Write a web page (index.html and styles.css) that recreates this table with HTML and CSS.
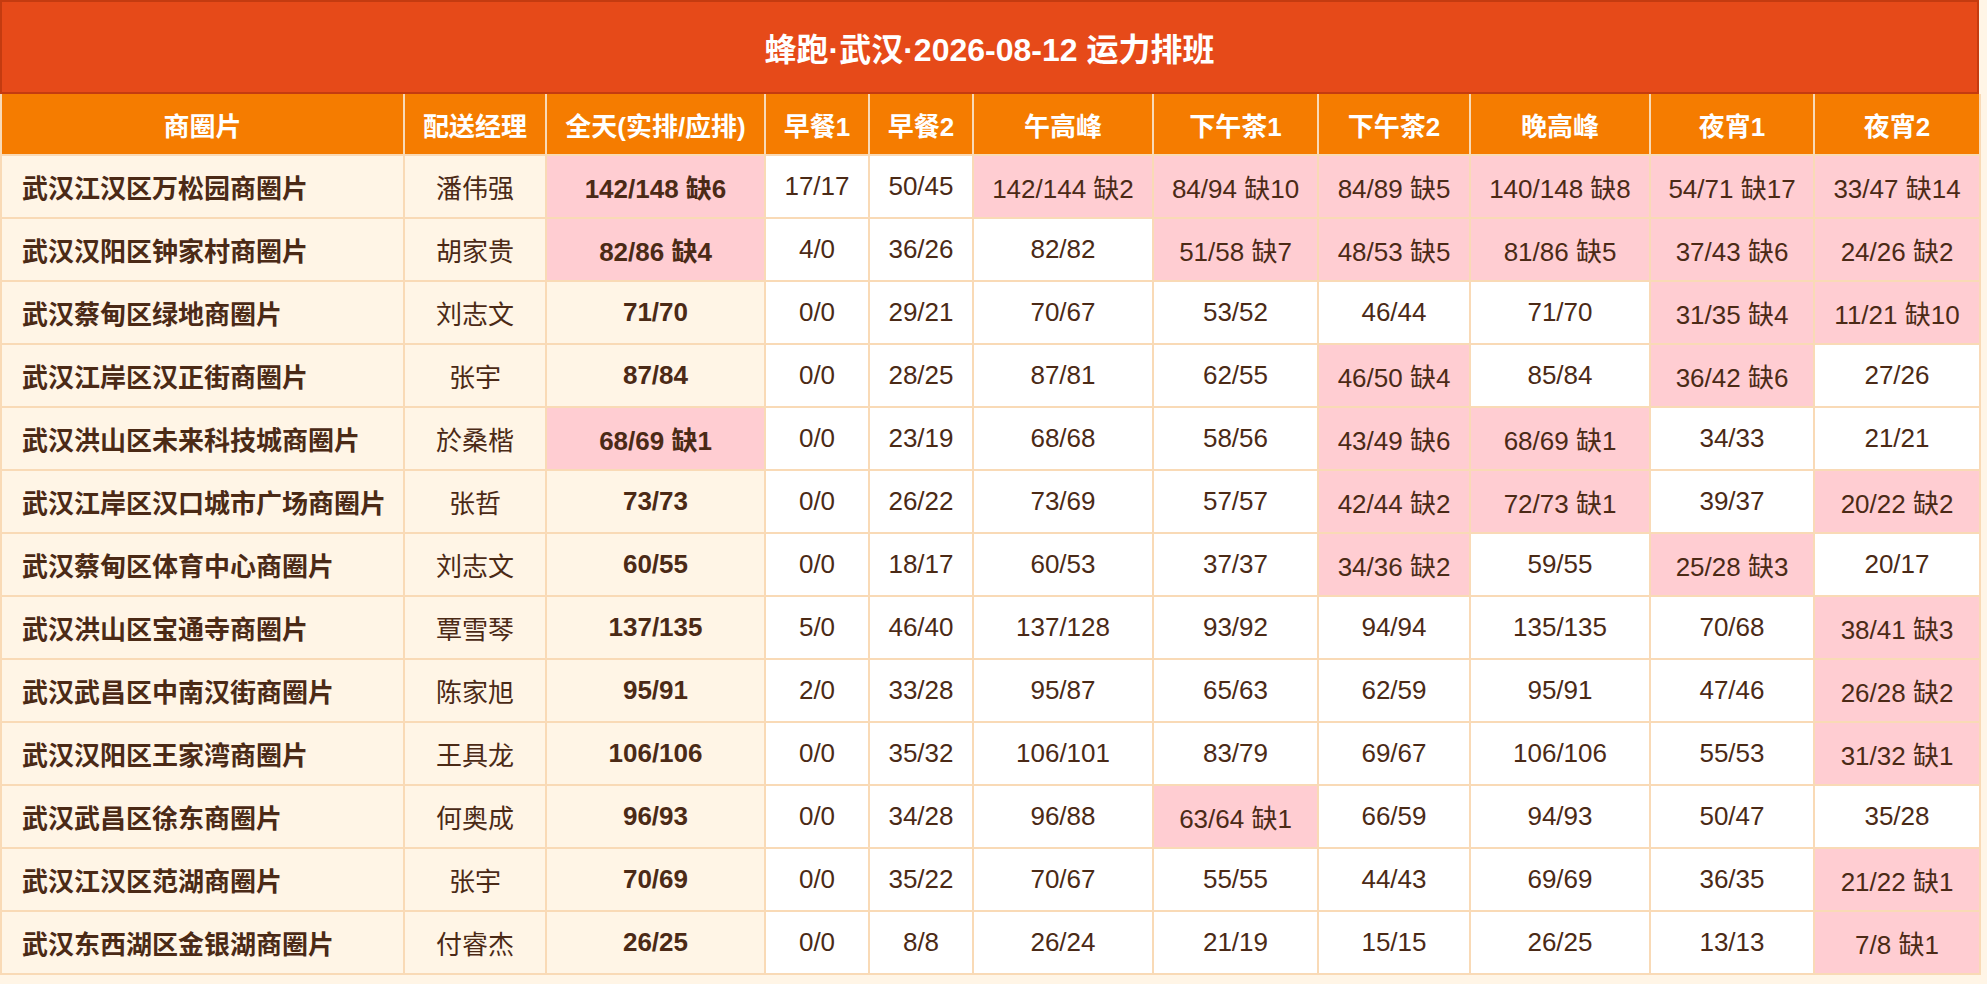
FILE: index.html
```html
<!DOCTYPE html>
<html lang="zh-CN">
<head>
<meta charset="utf-8">
<title>蜂跑·武汉·2026-08-12 运力排班</title>
<link rel="stylesheet" href="styles.css">
</head>
<body>
<div class="page">
  <div class="title">蜂跑·武汉·2026-08-12 运力排班</div>
  <table class="grid">
    <colgroup>
      <col class="c1"><col class="c2"><col class="c3"><col class="c4"><col class="c5"><col class="c6"><col class="c7"><col class="c8"><col class="c9"><col class="c10"><col class="c11">
    </colgroup>
    <thead>
      <tr><th>商圈片</th><th>配送经理</th><th>全天(实排/应排)</th><th>早餐1</th><th>早餐2</th><th>午高峰</th><th>下午茶1</th><th>下午茶2</th><th>晚高峰</th><th>夜宵1</th><th>夜宵2</th></tr>
    </thead>
    <tbody>
      <tr><td class="area">武汉江汉区万松园商圈片</td><td class="mgr">潘伟强</td><td class="day short">142/148 缺6</td><td>17/17</td><td>50/45</td><td class="short">142/144 缺2</td><td class="short">84/94 缺10</td><td class="short">84/89 缺5</td><td class="short">140/148 缺8</td><td class="short">54/71 缺17</td><td class="short">33/47 缺14</td></tr>
      <tr><td class="area">武汉汉阳区钟家村商圈片</td><td class="mgr">胡家贵</td><td class="day short">82/86 缺4</td><td>4/0</td><td>36/26</td><td>82/82</td><td class="short">51/58 缺7</td><td class="short">48/53 缺5</td><td class="short">81/86 缺5</td><td class="short">37/43 缺6</td><td class="short">24/26 缺2</td></tr>
      <tr><td class="area">武汉蔡甸区绿地商圈片</td><td class="mgr">刘志文</td><td class="day">71/70</td><td>0/0</td><td>29/21</td><td>70/67</td><td>53/52</td><td>46/44</td><td>71/70</td><td class="short">31/35 缺4</td><td class="short">11/21 缺10</td></tr>
      <tr><td class="area">武汉江岸区汉正街商圈片</td><td class="mgr">张宇</td><td class="day">87/84</td><td>0/0</td><td>28/25</td><td>87/81</td><td>62/55</td><td class="short">46/50 缺4</td><td>85/84</td><td class="short">36/42 缺6</td><td>27/26</td></tr>
      <tr><td class="area">武汉洪山区未来科技城商圈片</td><td class="mgr">於桑楷</td><td class="day short">68/69 缺1</td><td>0/0</td><td>23/19</td><td>68/68</td><td>58/56</td><td class="short">43/49 缺6</td><td class="short">68/69 缺1</td><td>34/33</td><td>21/21</td></tr>
      <tr><td class="area">武汉江岸区汉口城市广场商圈片</td><td class="mgr">张哲</td><td class="day">73/73</td><td>0/0</td><td>26/22</td><td>73/69</td><td>57/57</td><td class="short">42/44 缺2</td><td class="short">72/73 缺1</td><td>39/37</td><td class="short">20/22 缺2</td></tr>
      <tr><td class="area">武汉蔡甸区体育中心商圈片</td><td class="mgr">刘志文</td><td class="day">60/55</td><td>0/0</td><td>18/17</td><td>60/53</td><td>37/37</td><td class="short">34/36 缺2</td><td>59/55</td><td class="short">25/28 缺3</td><td>20/17</td></tr>
      <tr><td class="area">武汉洪山区宝通寺商圈片</td><td class="mgr">覃雪琴</td><td class="day">137/135</td><td>5/0</td><td>46/40</td><td>137/128</td><td>93/92</td><td>94/94</td><td>135/135</td><td>70/68</td><td class="short">38/41 缺3</td></tr>
      <tr><td class="area">武汉武昌区中南汉街商圈片</td><td class="mgr">陈家旭</td><td class="day">95/91</td><td>2/0</td><td>33/28</td><td>95/87</td><td>65/63</td><td>62/59</td><td>95/91</td><td>47/46</td><td class="short">26/28 缺2</td></tr>
      <tr><td class="area">武汉汉阳区王家湾商圈片</td><td class="mgr">王具龙</td><td class="day">106/106</td><td>0/0</td><td>35/32</td><td>106/101</td><td>83/79</td><td>69/67</td><td>106/106</td><td>55/53</td><td class="short">31/32 缺1</td></tr>
      <tr><td class="area">武汉武昌区徐东商圈片</td><td class="mgr">何奥成</td><td class="day">96/93</td><td>0/0</td><td>34/28</td><td>96/88</td><td class="short">63/64 缺1</td><td>66/59</td><td>94/93</td><td>50/47</td><td>35/28</td></tr>
      <tr><td class="area">武汉江汉区范湖商圈片</td><td class="mgr">张宇</td><td class="day">70/69</td><td>0/0</td><td>35/22</td><td>70/67</td><td>55/55</td><td>44/43</td><td>69/69</td><td>36/35</td><td class="short">21/22 缺1</td></tr>
      <tr><td class="area">武汉东西湖区金银湖商圈片</td><td class="mgr">付睿杰</td><td class="day">26/25</td><td>0/0</td><td>8/8</td><td>26/24</td><td>21/19</td><td>15/15</td><td>26/25</td><td>13/13</td><td class="short">7/8 缺1</td></tr>
    </tbody>
  </table>
</div>
</body>
</html>
```

FILE: styles.css
```css
html, body {
  margin: 0;
  padding: 0;
  background: #fff5e6;
}

body {
  font-family: "Liberation Sans", "Noto Sans CJK SC", sans-serif;
  color: #4b2a16;
}

.page {
  width: 1979px;
}

.title {
  box-sizing: border-box;
  height: 94px;
  background: #e64a19;
  border: 2px solid #c43b10;
  color: #ffffff;
  font-size: 32px;
  font-weight: bold;
  display: flex;
  align-items: center;
  justify-content: center;
}

.grid {
  width: 1979px;
  table-layout: fixed;
  border-collapse: collapse;
  font-size: 26px;
}

.c1 { width: 403px; }
.c2 { width: 142px; }
.c3 { width: 219px; }
.c4 { width: 104px; }
.c5 { width: 104px; }
.c6 { width: 180px; }
.c7 { width: 165px; }
.c8 { width: 152px; }
.c9 { width: 180px; }
.c10 { width: 164px; }
.c11 { width: 166px; }

.grid th {
  height: 60px;
  padding: 0 8px;
  background: #f57c00;
  color: #ffffff;
  font-weight: bold;
  text-align: center;
  border: 2px solid #f9dab6;
  border-top: none;
  white-space: nowrap;
}

.grid td {
  height: 61px;
  padding: 0 8px;
  background: #ffffff;
  text-align: center;
  border: 2px solid #f9dab6;
  white-space: nowrap;
}

.grid td.area {
  text-align: left;
  padding-left: 20px;
  font-weight: bold;
  background: #fff5e6;
}

.grid td.mgr {
  background: #fff5e6;
}

.grid td.day {
  font-weight: bold;
  background: #fff5e6;
}

.grid td.short {
  background: #ffcdd2;
}
```
